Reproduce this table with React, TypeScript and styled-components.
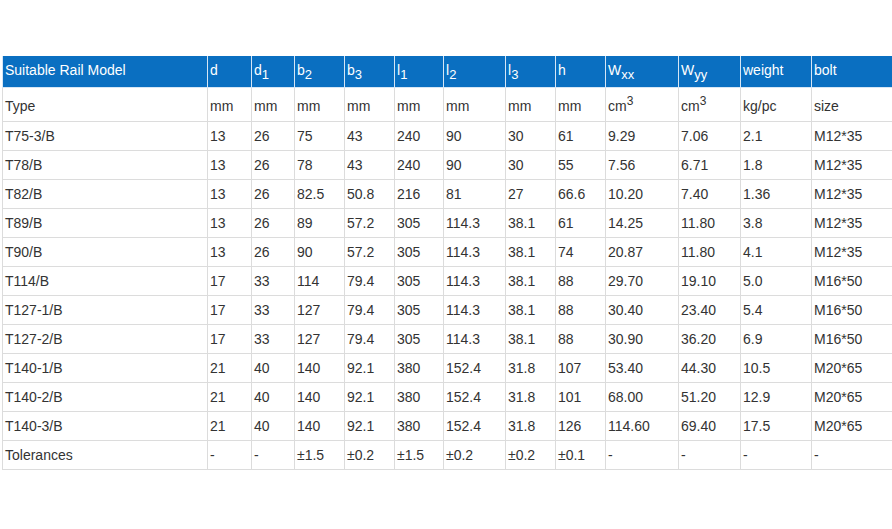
import styled, { createGlobalStyle } from 'styled-components';
import { ReactNode } from 'react';

const GlobalStyle = createGlobalStyle`
  html, body {
    margin: 0;
    padding: 0;
    background: #fff;
    overflow: hidden;
  }
  body {
    font-family: 'Liberation Sans', Arial, sans-serif;
  }
`;

const StyledPage = styled.div`
  width: 892px;
  height: 529px;
  padding: 56px 0 0 2px;
  box-sizing: border-box;
  overflow: hidden;
`;

const StyledTable = styled.table`
  border-collapse: collapse;
  table-layout: fixed;
  width: 891px;
  font-size: 14px;
  color: #333;
`;

const StyledHeadCell = styled.th`
  background-color: #0a6fc1;
  color: #fff;
  font-weight: normal;
  text-align: left;
  padding: 0 3px 3px 2px;
  height: 28px;
  border: 1px solid #d6e6f5;
  border-top: none;
  vertical-align: middle;
`;

const StyledCell = styled.td<{ $tall?: boolean }>`
  padding: ${({ $tall }) => ($tall ? '2px 3px 0 2px' : '0 3px 0 2px')};
  height: ${({ $tall }) => ($tall ? '31px' : '28px')};
  border: 1px solid #dcdcdc;
  vertical-align: middle;
  white-space: nowrap;
`;

const Sub = styled.sub`
  font-size: 13px;
  vertical-align: -4px;
  line-height: 0;
`;

const Sup = styled.sup`
  font-size: 12px;
  vertical-align: 6px;
  line-height: 0;
`;

const widths = [205, 44, 43, 50, 50, 49, 62, 50, 50, 73, 62, 71, 82];

const heads: ReactNode[] = [
  'Suitable Rail Model',
  'd',
  <>d<Sub>1</Sub></>,
  <>b<Sub>2</Sub></>,
  <>b<Sub>3</Sub></>,
  <>l<Sub>1</Sub></>,
  <>l<Sub>2</Sub></>,
  <>l<Sub>3</Sub></>,
  'h',
  <>W<Sub>xx</Sub></>,
  <>W<Sub>yy</Sub></>,
  'weight',
  'bolt',
];

const units: ReactNode[] = [
  'Type',
  'mm',
  'mm',
  'mm',
  'mm',
  'mm',
  'mm',
  'mm',
  'mm',
  <>cm<Sup>3</Sup></>,
  <>cm<Sup>3</Sup></>,
  'kg/pc',
  'size',
];

const rows: string[][] = [
  ['T75-3/B', '13', '26', '75', '43', '240', '90', '30', '61', '9.29', '7.06', '2.1', 'M12*35'],
  ['T78/B', '13', '26', '78', '43', '240', '90', '30', '55', '7.56', '6.71', '1.8', 'M12*35'],
  ['T82/B', '13', '26', '82.5', '50.8', '216', '81', '27', '66.6', '10.20', '7.40', '1.36', 'M12*35'],
  ['T89/B', '13', '26', '89', '57.2', '305', '114.3', '38.1', '61', '14.25', '11.80', '3.8', 'M12*35'],
  ['T90/B', '13', '26', '90', '57.2', '305', '114.3', '38.1', '74', '20.87', '11.80', '4.1', 'M12*35'],
  ['T114/B', '17', '33', '114', '79.4', '305', '114.3', '38.1', '88', '29.70', '19.10', '5.0', 'M16*50'],
  ['T127-1/B', '17', '33', '127', '79.4', '305', '114.3', '38.1', '88', '30.40', '23.40', '5.4', 'M16*50'],
  ['T127-2/B', '17', '33', '127', '79.4', '305', '114.3', '38.1', '88', '30.90', '36.20', '6.9', 'M16*50'],
  ['T140-1/B', '21', '40', '140', '92.1', '380', '152.4', '31.8', '107', '53.40', '44.30', '10.5', 'M20*65'],
  ['T140-2/B', '21', '40', '140', '92.1', '380', '152.4', '31.8', '101', '68.00', '51.20', '12.9', 'M20*65'],
  ['T140-3/B', '21', '40', '140', '92.1', '380', '152.4', '31.8', '126', '114.60', '69.40', '17.5', 'M20*65'],
  ['Tolerances', '-', '-', '±1.5', '±0.2', '±1.5', '±0.2', '±0.2', '±0.1', '-', '-', '-', '-'],
];

export default function App() {
  return (
    <>
      <GlobalStyle />
      <StyledPage>
        <StyledTable>
          <colgroup>
            {widths.map((w, i) => (
              <col key={i} style={{ width: w }} />
            ))}
          </colgroup>
          <thead>
            <tr>
              {heads.map((h, i) => (
                <StyledHeadCell key={i}>{h}</StyledHeadCell>
              ))}
            </tr>
          </thead>
          <tbody>
            <tr>
              {units.map((u, i) => (
                <StyledCell key={i} $tall>
                  {u}
                </StyledCell>
              ))}
            </tr>
            {rows.map((row) => (
              <tr key={row[0]}>
                {row.map((v, i) => (
                  <StyledCell key={i}>{v}</StyledCell>
                ))}
              </tr>
            ))}
          </tbody>
        </StyledTable>
      </StyledPage>
    </>
  );
}
